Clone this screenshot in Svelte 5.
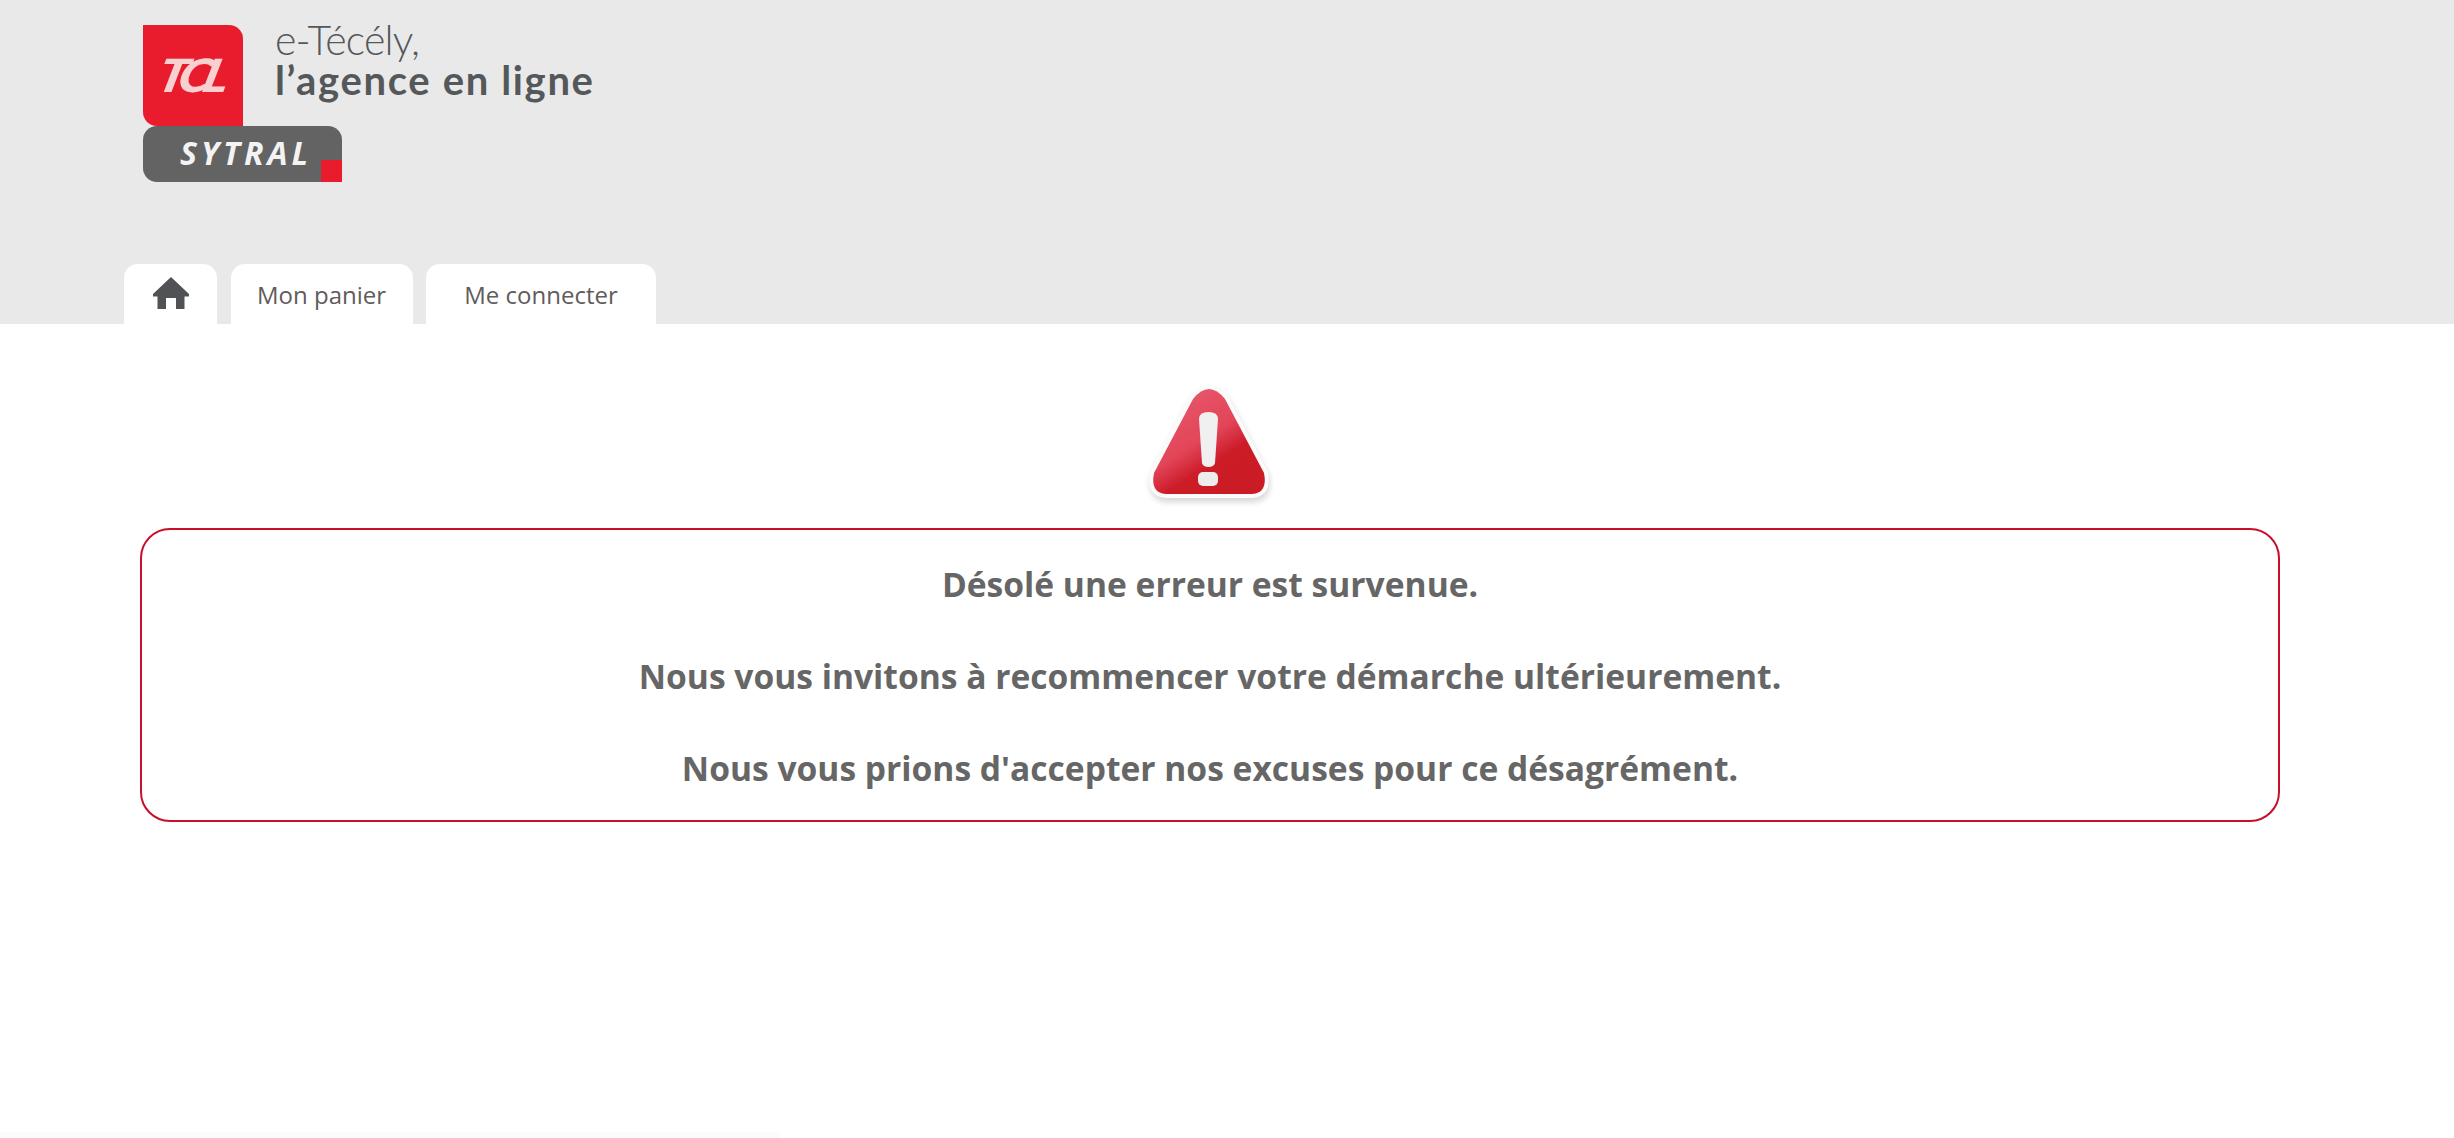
<script>
  const lines = [
    "Désolé une erreur est survenue.",
    "Nous vous invitons à recommencer votre démarche ultérieurement.",
    "Nous vous prions d'accepter nos excuses pour ce désagrément."
  ];
</script>

<div class="page">
  <header class="header">
    <div class="brand">
      <div class="tcl"><span>TCL</span></div>
      <div class="tagline">
        <div class="light">e-Técély,</div>
        <div class="strong">l’agence en ligne</div>
      </div>
      <div class="sytral"><span>SYTRAL</span><i></i></div>
    </div>
    <nav class="tabs">
      <a class="tab home" href="#top" aria-label="Accueil">
        <svg width="38" height="34" viewBox="0 0 38 34">
          <path fill="#515255" d="M19 1 L37 18 L37 20.5 L32.5 20.5 L32.5 33 L24 33 L24 22 L14 22 L14 33 L5.5 33 L5.5 20.5 L1 20.5 L1 18 Z" />
        </svg>
      </a>
      <a class="tab panier" href="#top">Mon panier</a>
      <a class="tab connect" href="#top">Me connecter</a>
    </nav>
  </header>

  <main class="main">
    <div class="alert-icon">
      <svg width="130" height="124" viewBox="0 0 130 124">
        <defs>
          <linearGradient id="red" x1="0.2" y1="0.1" x2="0.7" y2="0.85">
            <stop offset="0" stop-color="#e8566a" />
            <stop offset="0.5" stop-color="#e24558" />
            <stop offset="0.78" stop-color="#cc1a28" />
            <stop offset="1" stop-color="#cb1a26" />
          </linearGradient>
          <filter id="soft" x="-20%" y="-20%" width="140%" height="140%">
            <feGaussianBlur stdDeviation="3" />
          </filter>
          <filter id="crisp" x="-5%" y="-5%" width="110%" height="110%">
            <feGaussianBlur stdDeviation="0.6" />
          </filter>
        </defs>
        <path d="M49 16 Q57 6 65 6 Q73 6 81 16 L120 90 Q124 110 108 111 L22 111 Q6 110 10 90 Z" fill="#000" stroke="#000" stroke-width="8" opacity="0.16" filter="url(#soft)" transform="translate(1 4)" />
        <g filter="url(#crisp)">
          <path d="M49 16 Q57 6 65 6 Q73 6 81 16 L120 90 Q124 110 108 111 L22 111 Q6 110 10 90 Z" fill="#fff" stroke="#fbfbfb" stroke-width="8" stroke-linejoin="round" />
          <path d="M49 16 Q57 6 65 6 Q73 6 81 16 L120 90 Q124 110 108 111 L22 111 Q6 110 10 90 Z" fill="url(#red)" />
          <path d="M55 36 Q55 29 64.5 29 Q74 29 74 36 L71 80 Q70 84 64.5 84 Q59 84 58 80 Z" fill="#f0f0f0" />
          <rect x="54" y="89" width="20" height="14" rx="5" fill="#ececec" />
        </g>
      </svg>
    </div>

    <section class="box">
      {#each lines as line}
        <p>{line}</p>
      {/each}
    </section>
  </main>

  <div class="strip"></div>
</div>

<style>
  :global(body) {
    margin: 0;
    background: #fff;
  }
  .page {
    min-height: 1138px;
    display: flex;
    flex-direction: column;
    font-family: "Open Sans", "Liberation Sans", sans-serif;
  }
  .header {
    height: 324px;
    box-sizing: border-box;
    background: #e9e9e9;
    display: flex;
    flex-direction: column;
    justify-content: space-between;
    padding: 25px 0 0 124px;
  }
  .brand {
    display: grid;
    grid-template-columns: 100px 99px auto;
    grid-template-rows: 101px 56px;
    margin-left: 19px;
  }
  .tcl {
    background: #e91c2d;
    border-radius: 0 14px 0 14px;
    display: flex;
    align-items: center;
    justify-content: center;
    overflow: hidden;
  }
  .tcl span {
    color: #f9d0d0;
    font: italic 900 46px/1 Lato, "Liberation Sans", sans-serif;
    letter-spacing: -7px;
    transform: scaleX(1.15) skewX(-12deg);
    margin-top: -2px;
    margin-right: 5px;
  }
  .sytral {
    grid-column: 1 / 3;
    grid-row: 2;
    position: relative;
    background: #636363;
    border-radius: 14px 14px 0 14px;
    display: flex;
    align-items: center;
    padding-left: 37px;
    overflow: hidden;
    box-sizing: border-box;
  }
  .sytral span {
    color: #f3f3f3;
    font: italic 700 32px/1 "Open Sans", sans-serif;
    letter-spacing: 4px;
    margin-top: -3px;
  }
  .sytral i {
    position: absolute;
    right: 0;
    bottom: 0;
    width: 21px;
    height: 22px;
    background: #e91c2d;
  }
  .tagline {
    grid-column: 2 / 4;
    grid-row: 1;
    align-self: start;
    justify-self: start;
    margin: -5px 0 0 32px;
    font-family: Lato, "Open Sans", sans-serif;
    line-height: 40px;
    color: #55585a;
    white-space: nowrap;
  }
  .light {
    font-size: 41px;
    font-weight: 300;
    letter-spacing: -0.8px;
  }
  .strong {
    font-weight: 700;
    font-size: 40px;
    letter-spacing: 1.65px;
  }
  .tabs {
    display: flex;
    gap: 13.5px;
  }
  .tab {
    height: 60px;
    box-sizing: border-box;
    background: #fff;
    border-radius: 14px 14px 0 0;
    display: flex;
    align-items: center;
    justify-content: center;
    color: #5f5c5c;
    font-size: 24px;
    text-decoration: none;
  }
  .home { width: 93px; padding-bottom: 2px; }
  .panier { width: 182px; }
  .connect { width: 230px; }
  .main {
    padding: 59px 174px 0 140px;
  }
  .alert-icon {
    display: flex;
    justify-content: center;
    height: 145px;
  }
  .alert-icon svg {
    margin-right: 3px;
  }
  .box {
    box-sizing: border-box;
    height: 294px;
    border: 2px solid #c90e2c;
    border-radius: 30px;
    padding: 31px 0 0;
    text-align: center;
    color: #666666;
    font-size: 33.6px;
    font-weight: 700;
    line-height: 46px;
  }
  .box p {
    margin: 0 0 46px;
  }
  .strip {
    margin-top: auto;
    width: 780px;
    height: 6px;
    background: #fbfbfb;
  }
</style>
